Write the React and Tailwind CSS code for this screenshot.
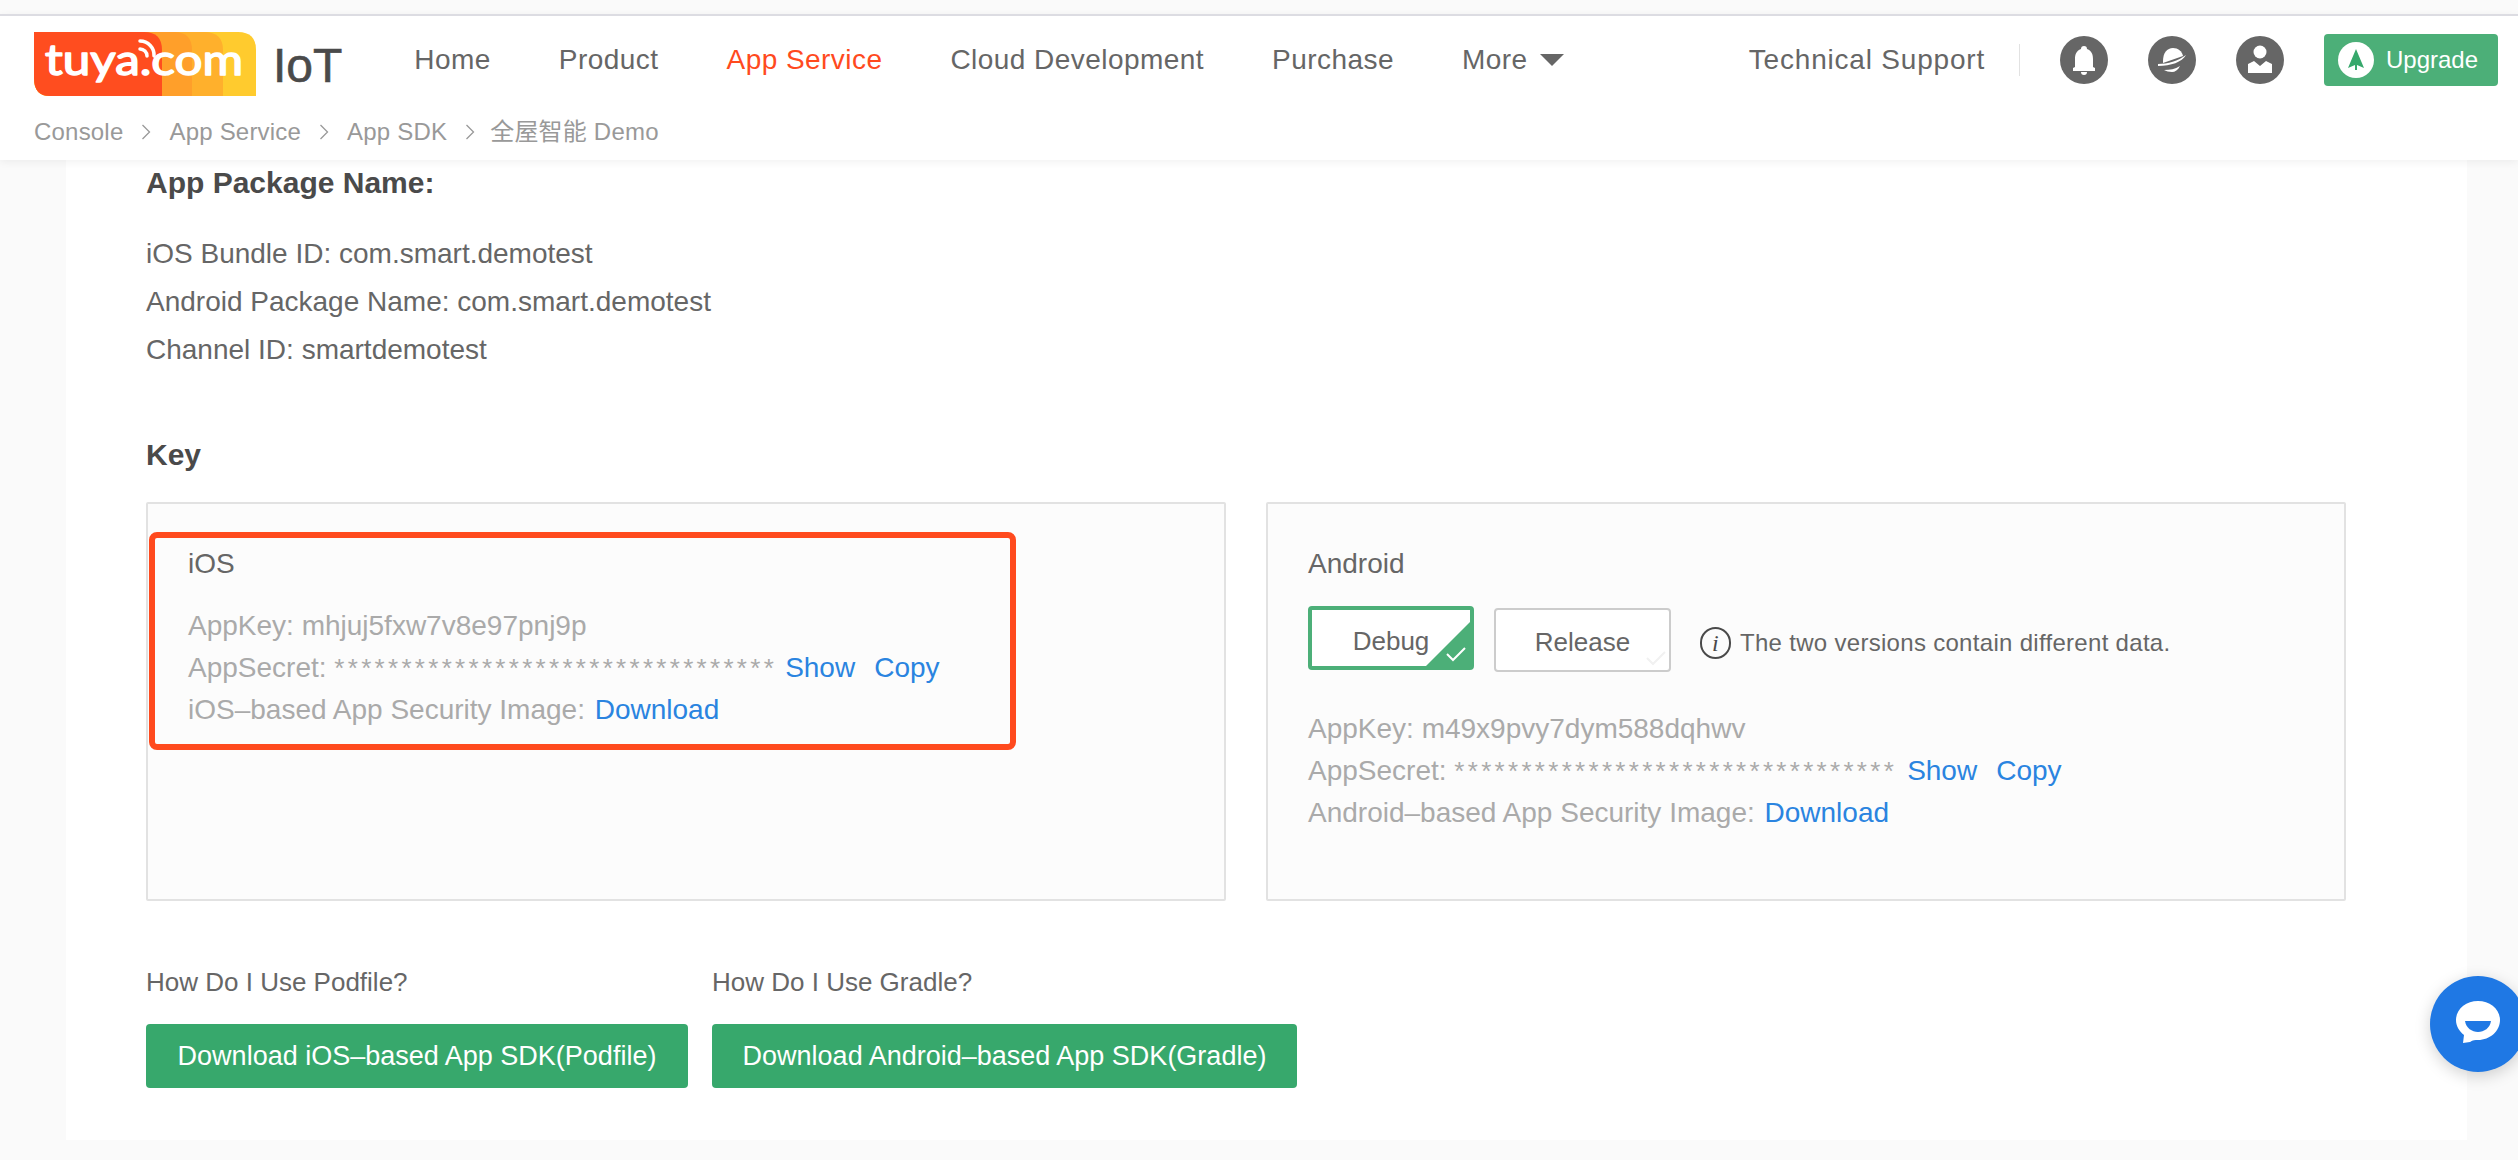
import React from 'react';

const FONT = "font-['Liberation_Sans','Noto_Sans_CJK_SC',sans-serif]";
const STARS = '*********************************';

// Logo: colour bands drawn, wordmark kept as text
const Logo = () => (
  <svg width="222" height="64" viewBox="0 0 222 64" className="mt-[8px] shrink-0">
    <path d="M0 0H204Q222 0 222 18V64H16Q0 64 0 46Z" fill="#ffcb2e" />
    <path d="M0 0H170Q189 0 189 18V64H16Q0 64 0 46Z" fill="#ffb02c" />
    <path d="M0 0H140Q158 0 158 18V64H16Q0 64 0 46Z" fill="#ff9f2a" />
    <path d="M0 0H110Q128 0 128 18V64H16Q0 64 0 46Z" fill="#ff4d1f" />
    <text x="11" y="43" fontFamily="Lato, sans-serif" fontWeight="400" fontSize="42" fill="#fff" stroke="#fff" strokeWidth="1.500" strokeLinejoin="round" textLength="198" lengthAdjust="spacingAndGlyphs">tuya.com</text>
    <path d="M106 9a14 14 0 0 1 14 15M106 17a7 7 0 0 1 7 7" fill="none" stroke="#fff" strokeWidth="3.500" strokeLinecap="round" />
  </svg>
);

const Bell = () => (
  <svg width="48" height="48" viewBox="0 0 48 48">
    <circle cx="24" cy="24" r="24" fill="#666" />
    <path d="M24 10a3 3 0 0 1 3 3c5 2 6 6 6 10v8l2 1v3H13v-3l2-1v-8c0-4 1-8 6-10a3 3 0 0 1 3-3z" fill="#fff" />
    <path d="M21 36h6a3 3 0 0 1-6 0z" fill="#fff" />
  </svg>
);

const Planet = () => (
  <svg width="48" height="48" viewBox="0 0 48 48">
    <circle cx="24" cy="24" r="24" fill="#666" />
    <path d="M15 25c0-8 4-13 10-13 5 0 9 3 10 8l-20 7z" fill="#fff" />
    <path d="M10 28c10 0 20-3 28-9-4 7-15 11-28 11z" fill="#fff" />
    <path d="M16 34c6 0 11-1 16-4-2 4-5 6-8 6s-6-1-8-2z" fill="#fff" />
  </svg>
);

const UserIcon = () => (
  <svg width="48" height="48" viewBox="0 0 48 48">
    <circle cx="24" cy="24" r="24" fill="#666" />
    <circle cx="24" cy="16" r="6.500" fill="#fff" />
    <path d="M12 28l6-3 6 5 6-5 6 3v9H12z" fill="#fff" />
  </svg>
);

const Plane = () => (
  <svg width="36" height="36" viewBox="0 0 36 36">
    <circle cx="18" cy="18" r="18" fill="#fff" />
    <path d="M18 7l8 19-7-3v5h-2v-5l-7 3z" fill="#37a86c" />
  </svg>
);

const Chevron = () => (
  <svg width="10" height="18" viewBox="0 0 10 18" className="shrink-0">
    <path d="M1.500 2l7 7-7 7" fill="none" stroke="#999" strokeWidth="1.300" />
  </svg>
);

const Header = () => (
  <header className="h-[146px] bg-white border-t-2 border-[#dcdce2] mt-[14px] shadow-[0_2px_8px_rgba(0,0,0,0.06)] relative z-10 box-border">
    <div className="flex items-center justify-between h-[88px] pl-[34px] pr-[20px]">
      <div className="flex items-center">
        <Logo />
        <span className="ml-[17px] text-[48px] leading-none text-[#4a4a4a] mt-[12px] [-webkit-text-stroke:0.6px_#4a4a4a]">IoT</span>
        <nav className="ml-[72px] flex items-center gap-[68px] text-[28px] tracking-[0.45px] text-[#666]">
          <a>Home</a>
          <a>Product</a>
          <a className="text-[#ff4a1e]">App Service</a>
          <a>Cloud Development</a>
          <a>Purchase</a>
          <a className="flex items-center gap-[12px]">
            More
            <span className="w-0 h-0 border-x-[12px] border-x-transparent border-t-[12px] border-t-[#666]" />
          </a>
        </nav>
      </div>
      <div className="flex items-center">
        <span className="text-[28px] tracking-[0.8px] text-[#666]">Technical Support</span>
        <span className="ml-[34px] mr-[40px] w-[1px] h-[32px] bg-[#e2e2e2]" />
        <div className="flex gap-[40px]">
          <Bell />
          <Planet />
          <UserIcon />
        </div>
        <button className="ml-[40px] flex items-center w-[174px] h-[52px] pl-[14px] rounded-[4px] bg-[#4caf78] text-white text-[24px]">
          <Plane />
          <span className="ml-[12px]">Upgrade</span>
        </button>
      </div>
    </div>
    <div className="mt-[12px] pl-[34px] flex items-center gap-[18px] text-[24px] tracking-[0.2px] leading-[32px] text-[#999]">
      <span>Console</span>
      <Chevron />
      <span>App Service</span>
      <Chevron />
      <span>App SDK</span>
      <Chevron />
      <span className="-ml-[3px]">全屋智能 Demo</span>
    </div>
  </header>
);

const Link = ({ children, className }) => (
  <a className={`text-[#2a84e0] ${className || ''}`}>{children}</a>
);

const KeyLines = ({ appKey, label, showGap }) => (
  <div className="text-[28px] leading-[42px] text-[#aaa]">
    <div>AppKey: {appKey}</div>
    <div>
      AppSecret: <span className="text-[26px] tracking-[3.3px]">{STARS}</span>
      <Link className={showGap}>Show</Link>
      <Link className="ml-[19px]">Copy</Link>
    </div>
    <div>
      {label} App Security Image: <Link className="ml-[2px]">Download</Link>
    </div>
  </div>
);

const CheckMark = ({ color }) => (
  <svg width="20" height="16" viewBox="0 0 20 16">
    <path d="M1 8l6 6L19 2" fill="none" stroke={color} strokeWidth="2" />
  </svg>
);

const App = () => {
  return (
    <div className={`${FONT} relative h-[1160px] overflow-hidden bg-[#fafafa] text-[#666]`}>
      <Header />
      <main className="mx-[66px] w-[2401px] bg-white pl-[80px] pb-[52px]">
        <h2 className="pt-[3px] text-[30px] font-bold leading-[40px] text-[#4a4a4a]">App Package Name:</h2>
        <div className="mt-[27px] text-[28px] leading-[48px]">
          <div>iOS Bundle ID: com.smart.demotest</div>
          <div>Android Package Name: com.smart.demotest</div>
          <div>Channel ID: smartdemotest</div>
        </div>
        <h2 className="mt-[61px] text-[30px] font-bold leading-[40px] text-[#4a4a4a]">Key</h2>

        <div className="mt-[27px] flex gap-[40px]">
          <section className="relative w-[1080px] h-[399px] border-2 border-[#e2e2e2] rounded-[2px] bg-[#fcfcfc] pl-[40px] pt-[40px]">
            <div className="text-[28px] leading-[40px]">iOS</div>
            <div className="mt-[21px]">
              <KeyLines appKey="mhjuj5fxw7v8e97pnj9p" label="iOS–based" showGap="ml-[8px]" />
            </div>
            <div className="absolute left-[1px] top-[28px] w-[867px] h-[218px] border-[6px] border-[#ff4a1e] rounded-[8px]" />
          </section>

          <section className="w-[1080px] h-[399px] border-2 border-[#e2e2e2] rounded-[2px] bg-[#fcfcfc] pl-[40px] pt-[40px]">
            <div className="text-[28px] leading-[40px]">Android</div>
            <div className="mt-[22px] flex items-start">
              <button className="relative w-[166px] h-[64px] pt-[7px] border-4 border-[#4caf78] rounded-[4px] bg-white text-[26px] text-[#666] overflow-hidden">
                Debug
                <svg width="44" height="44" viewBox="0 0 44 44" className="absolute right-0 bottom-0">
                  <path d="M44 0V44H0Z" fill="#4caf78" />
                </svg>
                <span className="absolute right-[4px] bottom-[4px] flex">
                  <CheckMark color="#fff" />
                </span>
              </button>
              <button className="relative ml-[20px] mt-[2px] w-[177px] h-[64px] pt-[4px] border-2 border-[#ccc] rounded-[4px] bg-white text-[26px] text-[#666]">
                Release
                <span className="absolute right-[3px] bottom-[4px] flex">
                  <CheckMark color="#f1f1f1" />
                </span>
              </button>
              <div className="ml-[29px] mt-[19px] flex items-center text-[24px] tracking-[0.3px] text-[#666]">
                <span className="flex items-center justify-center w-[31px] h-[32px] rounded-full border-2 border-[#4a4a4a] font-['Liberation_Serif',serif] italic text-[24px] text-[#4a4a4a]">i</span>
                <span className="ml-[9px]">The two versions contain different data.</span>
              </div>
            </div>
            <div className="mt-[36px]">
              <KeyLines appKey="m49x9pvy7dym588dqhwv" label="Android–based" showGap="ml-[10px]" />
            </div>
          </section>
        </div>

        <div className="mt-[63px] flex gap-[24px]">
          <div className="w-[542px]">
            <div className="text-[26px] leading-[36px]">How Do I Use Podfile?</div>
            <button className="mt-[24px] w-full h-[64px] rounded-[4px] bg-[#37a86c] text-white text-[27px]">
              Download iOS–based App SDK(Podfile)
            </button>
          </div>
          <div className="w-[585px]">
            <div className="text-[26px] leading-[36px]">How Do I Use Gradle?</div>
            <button className="mt-[24px] w-full h-[64px] rounded-[4px] bg-[#37a86c] text-white text-[27px]">
              Download Android–based App SDK(Gradle)
            </button>
          </div>
        </div>
      </main>

      <div className="absolute left-[2430px] top-[976px] w-[96px] h-[96px] pb-[2px] rounded-full bg-[#1f78e4] shadow-[0_4px_16px_rgba(0,0,0,0.18)] flex items-center justify-center">
        <svg width="44" height="44" viewBox="0 0 44 44">
          <path d="M22 0c12 0 22 8 22 19S34 39 22 39c-3 0-5 0-8 2l-7 1 1-8C3 30 0 25 0 19 0 8 10 0 22 0z" fill="#fff" />
          <path d="M9 20h26c-1 7-7 11-13 11S10 27 9 20z" fill="#1f78e4" />
        </svg>
      </div>
    </div>
  );
};

export default App;
